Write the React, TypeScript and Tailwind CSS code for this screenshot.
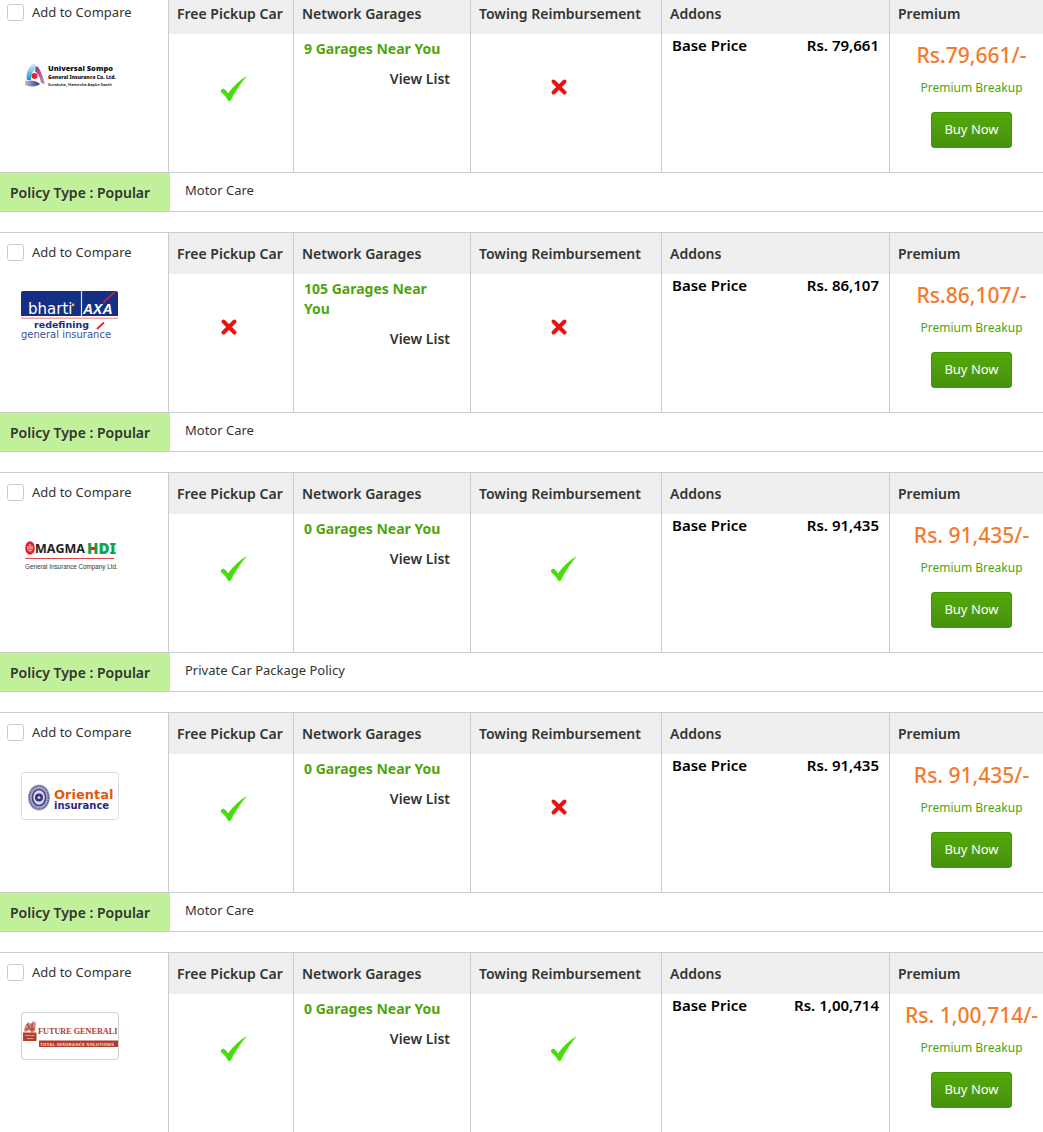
import type { ReactNode } from "react";

interface Quote {
  id: string;
  insurer: string;
  logo: ReactNode;
  freePickup: boolean;
  garages: number;
  towing: boolean;
  basePrice: string;
  premium: string;
  policy?: string;
}

function SompoLogo() {
  return (
    <svg viewBox="0 0 98 49" className="h-[49px] w-[98px]" aria-hidden="true">
      <defs>
        <linearGradient id="sompo-blue" x1="0" y1="0" x2="0" y2="1">
          <stop offset="0" stopColor="#c9edf8" />
          <stop offset="1" stopColor="#1295cf" />
        </linearGradient>
        <linearGradient id="sompo-pink" x1="0" y1="0" x2="1" y2="1">
          <stop offset="0" stopColor="#8b2f86" />
          <stop offset="1" stopColor="#d98cbb" />
        </linearGradient>
        <linearGradient id="sompo-navy" x1="0" y1="0" x2="1" y2="0">
          <stop offset="0" stopColor="#b7bde0" />
          <stop offset="1" stopColor="#26358c" />
        </linearGradient>
      </defs>
      <path d="M12 13 C6 17 5 24 6 29 L10 29 C10 23 12 20 15 17 L14 13Z" fill="url(#sompo-blue)" />
      <path d="M15 15 C19 16 22 26 24 33 L20 32 C19 26 17 23 14 20Z" fill="url(#sompo-pink)" />
      <path d="M4 30 C9 29 15 29 19 33 C16 36 8 36 4 34Z" fill="url(#sompo-navy)" />
      <circle cx="13.5" cy="25" r="3" fill="#e9232b" />
      <g fill="#111" fontFamily="Noto Sans, sans-serif">
        <text x="27" y="20" fontSize="7.5" fontWeight="900">Universal Sompo</text>
        <text x="27" y="28" fontSize="5" fontWeight="900">General Insurance Co. Ltd.</text>
        <text x="27" y="35" fontSize="4" fontWeight="600">Suraksha, Hamesha Aapke Saath</text>
      </g>
    </svg>
  );
}

function BhartiAxaLogo() {
  return (
    <svg viewBox="0 0 98 49" className="h-[49px] w-[98px]" aria-hidden="true">
      <path d="M0 25 V2 Q0 0 2 0 H95 Q97 0 97 2 V25Z" fill="#142f84" />
      <path d="M60.500 0 V25" stroke="#dfe4f3" strokeWidth="1.200" />
      <path d="M94 0.500 L82 12" stroke="#e2222f" strokeWidth="1.500" />
      <text x="7" y="22.500" fontSize="15" fill="#fff" fontFamily="DejaVu Sans, sans-serif">bharti</text>
      <circle cx="52" cy="14" r="1.400" fill="#f4c430" />
      <text x="62" y="22.500" fontSize="14" fontWeight="700" fontStyle="italic" fill="#fff" fontFamily="Liberation Sans, sans-serif">AXA</text>
      <path d="M0 27.200 H97" stroke="#f3a3a8" strokeWidth="1.600" />
      <text x="13" y="37" fontSize="9.500" fontWeight="700" fill="#142f84" fontFamily="DejaVu Sans, sans-serif">redefining</text>
      <path d="M76 38 L83 31.500" stroke="#e2222f" strokeWidth="1.800" />
      <text x="0" y="47" fontSize="10" fill="#3d5199" fontFamily="DejaVu Sans, sans-serif">general insurance</text>
    </svg>
  );
}

function MagmaLogo() {
  return (
    <svg viewBox="0 0 98 49" className="h-[49px] w-[98px]" aria-hidden="true">
      <ellipse cx="9" cy="17" rx="4.800" ry="6.800" fill="#e0202a" />
      <path d="M7 15 Q6.500 20 9 20 Q11.500 20 11 15 M9 13 V18" fill="none" stroke="#fff" strokeWidth="0.900" />
      <text x="14" y="22" fontSize="12.500" fontWeight="700" fill="#222" fontFamily="Open Sans, sans-serif">MAGMA</text>
      <text x="66" y="23" fontSize="15" fontWeight="900" fill="#12a24b" fontFamily="Noto Sans, sans-serif">HDI</text>
      <path d="M70 16 h4 v3 h-4Z" fill="#e0202a" />
      <path d="M4 27.500 H93" stroke="#d9484d" strokeWidth="1" />
      <text x="4" y="37.500" fontSize="6.300" fill="#333" fontFamily="Liberation Sans, sans-serif">General Insurance Company Ltd.</text>
    </svg>
  );
}

function OrientalLogo() {
  return (
    <svg viewBox="0 0 98 49" className="h-[49px] w-[98px]" aria-hidden="true">
      <rect x="0.500" y="1.500" width="97" height="47" rx="3" fill="#fff" stroke="#dcdcdc" />
      <ellipse cx="18" cy="26.500" rx="11" ry="13" fill="#a3a3c4" />
      <ellipse cx="18" cy="26.500" rx="9.500" ry="11.500" fill="none" stroke="#5b5b96" strokeWidth="1.500" strokeDasharray="1.500 1" />
      <ellipse cx="18" cy="26.500" rx="6.500" ry="8" fill="#d9d9ea" stroke="#3f3f86" strokeWidth="1.500" />
      <circle cx="18" cy="26.500" r="4" fill="#34347c" />
      <circle cx="18" cy="26.500" r="1.500" fill="#c9c9e2" />
      <text x="33" y="27.500" fontSize="13" fontWeight="700" fill="#e2590f" fontFamily="DejaVu Sans, sans-serif">Oriental</text>
      <text x="33" y="37.500" fontSize="10" fontWeight="700" fill="#2b2b7e" fontFamily="DejaVu Sans, sans-serif">insurance</text>
    </svg>
  );
}

function GeneraliLogo() {
  return (
    <svg viewBox="0 0 98 49" className="h-[49px] w-[98px]" aria-hidden="true">
      <rect x="0.500" y="1.500" width="97" height="47" rx="3" fill="#fff" stroke="#d0d0d0" />
      <path
        d="M4 15 L7 11 L10 13 L12 10 L15 12 L14 20 L11 22 L8 19 L5 21 L3 20Z"
        fill="#d58a80"
      />
      <path d="M6 13 L9 17 M11 12 V20 M4 18 H14" stroke="#a83a2c" strokeWidth="1.200" />
      <path d="M2 21.500 H15.500 V30 H2Z" fill="#b4412f" />
      <path d="M4 24.500 H13.500 M6 27.500 H12" stroke="#e3b1a8" strokeWidth="0.800" />
      <text x="17" y="23" fontSize="8.200" fontWeight="700" fill="#b03c2c" fontFamily="Liberation Serif, serif">FUTURE GENERALI</text>
      <path d="M18 29.500 H97 V36 H18Z" fill="#b03c2c" />
      <text x="19" y="34.500" fontSize="4.300" fontWeight="700" fill="#eec8c1" fontFamily="DejaVu Sans, sans-serif">TOTAL INSURANCE SOLUTIONS</text>
    </svg>
  );
}

const quotes: Quote[] = [
  {
    id: "sompo",
    insurer: "Universal Sompo",
    logo: <SompoLogo />,
    freePickup: true,
    garages: 9,
    towing: false,
    basePrice: "Rs. 79,661",
    premium: "Rs.79,661/-",
    policy: "Motor Care",
  },
  {
    id: "axa",
    insurer: "Bharti AXA",
    logo: <BhartiAxaLogo />,
    freePickup: false,
    garages: 105,
    towing: false,
    basePrice: "Rs. 86,107",
    premium: "Rs.86,107/-",
    policy: "Motor Care",
  },
  {
    id: "magma",
    insurer: "Magma HDI",
    logo: <MagmaLogo />,
    freePickup: true,
    garages: 0,
    towing: true,
    basePrice: "Rs. 91,435",
    premium: "Rs. 91,435/-",
    policy: "Private Car Package Policy",
  },
  {
    id: "oriental",
    insurer: "Oriental Insurance",
    logo: <OrientalLogo />,
    freePickup: true,
    garages: 0,
    towing: false,
    basePrice: "Rs. 91,435",
    premium: "Rs. 91,435/-",
    policy: "Motor Care",
  },
  {
    id: "generali",
    insurer: "Future Generali",
    logo: <GeneraliLogo />,
    freePickup: true,
    garages: 0,
    towing: true,
    basePrice: "Rs. 1,00,714",
    premium: "Rs. 1,00,714/-",
  },
];

const headings = [
  "Free Pickup Car",
  "Network Garages",
  "Towing Reimbursement",
  "Addons",
  "Premium",
];

function Availability({ available }: { available: boolean }) {
  return (
    <svg viewBox="0 0 32 32" className="mx-auto size-8" aria-hidden="true">
      {available ? (
        <path
          d="M5.500 18.500 Q6.500 15.500 8.500 15.500 Q11 17 13 20.500 Q21 9 32 3 Q23 13 15.500 28 H13.500 Q10 22 5.500 18.500Z"
          fill="#4bdc0c"
        />
      ) : (
        <path
          d="M8.500 8.500 L19.500 19.500 M19.500 8.500 L8.500 19.500"
          stroke="#ee1111"
          strokeWidth="4"
          strokeLinecap="round"
        />
      )}
    </svg>
  );
}

function QuoteCard({ quote }: { quote: Quote }) {
  return (
    <section className="border-y border-[#ccc]">
      <table className="w-full table-fixed border-separate border-spacing-0 text-left">
        <colgroup>
          <col className="w-[168px]" />
          <col className="w-[125px]" />
          <col className="w-[177px]" />
          <col className="w-[191px]" />
          <col className="w-[228px]" />
          <col className="w-[154px]" />
        </colgroup>
        <tbody className="align-top">
          <tr>
            <td rowSpan={2} className="p-0">
              <label className="flex h-[39px] items-center gap-2 pl-[7px] text-[13px]">
                <input
                  type="checkbox"
                  className="size-[17px] appearance-none rounded-[3px] border border-[#ccc] bg-white checked:bg-[#4ea60c]"
                />
                Add to Compare
              </label>
              <div role="img" aria-label={quote.insurer} className="mt-[19px] pl-[21px]">
                {quote.logo}
              </div>
            </td>
            {headings.map((heading) => (
              <th
                key={heading}
                scope="col"
                className="h-[41px] border-l border-[#ccc] bg-[#efefef] py-0 pl-2 align-middle text-[14px] font-semibold whitespace-nowrap"
              >
                {heading}
              </th>
            ))}
          </tr>
          <tr className="h-[138px]">
            <td className="border-l border-[#ccc] pt-[39px]">
              <Availability available={quote.freePickup} />
            </td>
            <td className="border-l border-[#ccc] pt-[5px] pr-5 pl-[10px] text-[14px] leading-5">
              <p className="pr-1 font-bold text-[#4ea60c]">
                {`${quote.garages} Garages Near You`}
              </p>
              <a href="#garages" className="mt-[10px] block text-right font-semibold">
                View List
              </a>
            </td>
            <td className="border-l border-[#ccc] pt-[39px] pr-[10px]">
              <Availability available={quote.towing} />
            </td>
            <td className="border-l border-[#ccc] px-[10px] pt-px text-[15px] leading-5 font-semibold text-black">
              <div className="flex justify-between">
                <span>Base Price</span>
                <span>{quote.basePrice}</span>
              </div>
            </td>
            <td className="border-l border-[#ccc] pt-[7px] pl-[10px] text-center">
              <p className="text-[21px] leading-7 font-medium whitespace-nowrap text-[#f47a2c]">
                {quote.premium}
              </p>
              <a href="#breakup" className="mt-[9px] block text-[12px] leading-5 text-[#4ea60c]">
                Premium Breakup
              </a>
              <button
                type="button"
                className="mt-[14px] h-9 w-[81px] rounded-[3px] border border-[#45920d] bg-linear-to-b from-[#52a90b] to-[#47920f] text-[13px] text-white"
              >
                Buy Now
              </button>
            </td>
          </tr>
        </tbody>
      </table>
      {quote.policy && (
        <div className="flex h-[39px] border-t border-[#ccc]">
          <div className="flex w-[170px] items-center bg-[#c1f09a] pl-[10px] text-[14px] font-semibold">
            Policy Type : Popular
          </div>
          <div className="flex items-center pb-[2px] pl-[15px] text-[13px]">{quote.policy}</div>
        </div>
      )}
    </section>
  );
}

export default function App() {
  return (
    <main className="-mt-2 flex flex-col gap-5 bg-white font-['Noto_Sans',sans-serif] text-[#333]">
      {quotes.map((quote) => (
        <QuoteCard key={quote.id} quote={quote} />
      ))}
    </main>
  );
}
